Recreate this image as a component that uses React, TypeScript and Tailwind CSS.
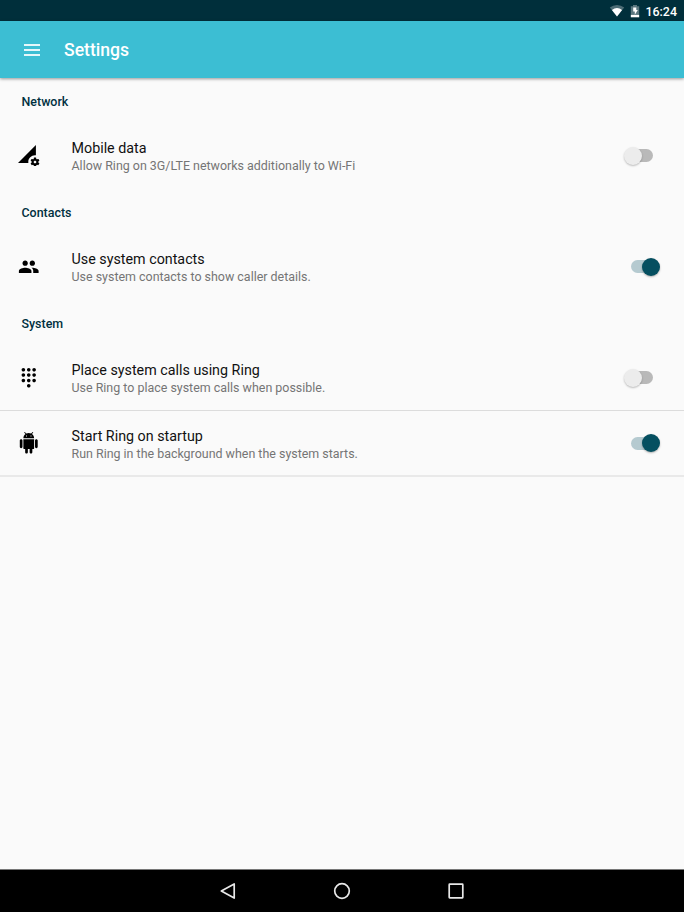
import type { ReactNode } from "react";
import { MdPermDataSetting, MdDialpad } from "react-icons/md";

function PeopleIcon() {
  return (
    <svg viewBox="0 0 24 24" className="size-[21.5px]" fill="currentColor">
      <path d="M16 11c1.66 0 2.99-1.34 2.99-3S17.66 5 16 5c-1.66 0-3 1.34-3 3s1.34 3 3 3zm-8 0c1.66 0 2.99-1.34 2.99-3S9.66 5 8 5C6.34 5 5 6.34 5 8s1.34 3 3 3zm0 2c-2.33 0-7 1.17-7 3.5V19h14v-2.5c0-2.33-4.67-3.5-7-3.5zm8 0c-.29 0-.62.02-.97.05 1.16.84 1.97 1.97 1.97 3.45V19h6v-2.5c0-2.33-4.67-3.5-7-3.5z" />
    </svg>
  );
}

function RobotIcon() {
  return (
    <svg viewBox="0 0 24 24" className="size-[21.5px]" fill="currentColor">
      <path d="M6 18c0 .55.45 1 1 1h1v3.5c0 .83.67 1.5 1.5 1.5s1.5-.67 1.5-1.5V19h2v3.5c0 .83.67 1.5 1.5 1.5s1.5-.67 1.5-1.5V19h1c.55 0 1-.45 1-1V8H6v10zM3.5 8C2.67 8 2 8.67 2 9.5v7c0 .83.67 1.5 1.5 1.5S5 17.33 5 16.5v-7C5 8.67 4.33 8 3.5 8zm17 0c-.83 0-1.5.67-1.5 1.5v7c0 .83.67 1.5 1.5 1.5s1.5-.67 1.5-1.5v-7c0-.83-.67-1.5-1.5-1.5zm-4.97-5.84l1.3-1.3c.2-.2.2-.51 0-.71-.2-.2-.51-.2-.71 0l-1.48 1.48C13.85 1.23 12.95 1 12 1c-.96 0-1.86.23-2.66.63L7.85.15c-.2-.2-.51-.2-.71 0-.2.2-.2.51 0 .71l1.31 1.31C6.97 3.26 6 5.01 6 7h12c0-1.99-.97-3.75-2.47-4.84zM10 5H9V4h1v1zm5 0h-1V4h1v1z" />
    </svg>
  );
}

function Toggle({ on }: { on: boolean }) {
  return on ? (
    <span className="mr-[24.5px] flex h-[13px] w-[29px] items-center justify-end rounded-full bg-linear-to-r from-[#b5cad0] from-90% to-transparent to-90%">
      <span className="size-[18px] shrink-0 rounded-full bg-[#054f60] shadow-[0_1px_2px_rgba(0,0,0,0.3)]" />
    </span>
  ) : (
    <span className="mr-[31px] flex h-[13px] w-[29px] items-center rounded-full bg-linear-to-r from-transparent from-20% to-[#b9b9b9] to-20%">
      <span className="size-[18px] shrink-0 rounded-full bg-[#ececec] shadow-[0_1px_2px_rgba(0,0,0,0.25)]" />
    </span>
  );
}

function Header({ children }: { children: ReactNode }) {
  return (
    <h2 className="flex h-[45px] items-center pl-[21.5px] pt-[4px] text-[12.45px] font-medium text-[#003040]">
      {children}
    </h2>
  );
}

type RowProps = { icon: ReactNode; title: string; detail: string; on: boolean; line?: boolean; last?: boolean };

function Row({ icon, title, detail, on, line, last }: RowProps) {
  return (
    <div
      className={`flex h-[66px] items-center ${last ? "border-b-2 border-[#e9e9e9]" : line ? "border-b border-[#dcdcdc]" : "border-b border-transparent"}`}
    >
      <span className="flex w-[71.5px] pl-[18px] text-black">{icon}</span>
      <div className="flex-1 pt-[2px]">
        <div className="text-[14.3px] leading-[19px] text-[#111]">{title}</div>
        <div className="text-[12.45px] leading-[16px] text-[#757575]">{detail}</div>
      </div>
      <Toggle on={on} />
    </div>
  );
}

export default function App() {
  return (
    <div className="flex h-[912px] w-[684px] flex-col overflow-hidden bg-[#fafafa] font-['Roboto',sans-serif]">
      <div className="flex h-[21px] shrink-0 items-center justify-end bg-[#002f3b] pr-[7px] text-white">
        <svg viewBox="0 0 16 13" className="mr-[5px] h-[13px] w-4">
          <path d="M8 12.5 .8 3.6a11.5 11.5 0 0 1 14.4 0z" fill="#4c6c75" />
          <path d="M8 12.5 2.9 6.1a8.2 8.2 0 0 1 10.2 0z" fill="#fff" />
        </svg>
        <svg viewBox="0 0 10 14" className="mr-[5px] h-[14px] w-[10px]">
          <path d="M3 1h4v1.3h2.2v8.5H.8V2.3H3z" fill="#5b777f" />
          <path d="M.8 10.8h8.4v2.5H.8z" fill="#fff" />
          <path d="M6.3 3.5H3.2v4h1.6v3.3l3-4.8H6.300z" fill="#fff" />
        </svg>
        <span className="pt-[2px] text-[12.45px] font-medium leading-[19px]">16:24</span>
      </div>
      <header className="z-10 flex h-[57px] shrink-0 items-center bg-[#3cbed3] shadow-[0_1px_3px_rgba(0,0,0,0.4)]">
        <div className="ml-[23.5px] flex w-[40.5px] flex-col gap-[3px]">
          <span className="h-[2px] w-[16.5px] bg-[#e4f7fa]" />
          <span className="h-[2px] w-[16.5px] bg-[#e4f7fa]" />
          <span className="h-[2px] w-[16.5px] bg-[#e4f7fa]" />
        </div>
        <h1 className="pt-[2px] text-[17.6px] font-medium text-white">Settings</h1>
      </header>
      <main className="flex-1">
        <Header>Network</Header>
        <Row icon={<MdPermDataSetting size={21.5} />} title="Mobile data" detail="Allow Ring on 3G/LTE networks additionally to Wi-Fi" on={false} />
        <Header>Contacts</Header>
        <Row icon={<PeopleIcon />} title="Use system contacts" detail="Use system contacts to show caller details." on />
        <Header>System</Header>
        <Row icon={<MdDialpad size={21.5} />} title="Place system calls using Ring" detail="Use Ring to place system calls when possible." on={false} line />
        <Row icon={<RobotIcon />} title="Start Ring on startup" detail="Run Ring in the background when the system starts." on last />
      </main>
      <nav className="flex h-[43px] shrink-0 items-center justify-center gap-[96px] border-t border-[#777] bg-black pb-px">
        <svg viewBox="0 0 18 18" className="size-[18px]" fill="none" stroke="#e8e8e8" strokeWidth="1.7">
          <path d="M15.2 1.9v14.2L2.3 9z" strokeLinejoin="round" />
        </svg>
        <svg viewBox="0 0 18 18" className="size-[18px]" fill="none" stroke="#e8e8e8" strokeWidth="1.7">
          <circle cx="9" cy="9" r="7.3" />
        </svg>
        <svg viewBox="0 0 18 18" className="size-[18px]" fill="none" stroke="#e8e8e8" strokeWidth="1.7">
          <rect x="2.2" y="2.2" width="13.6" height="13.6" rx=".5" />
        </svg>
      </nav>
    </div>
  );
}
